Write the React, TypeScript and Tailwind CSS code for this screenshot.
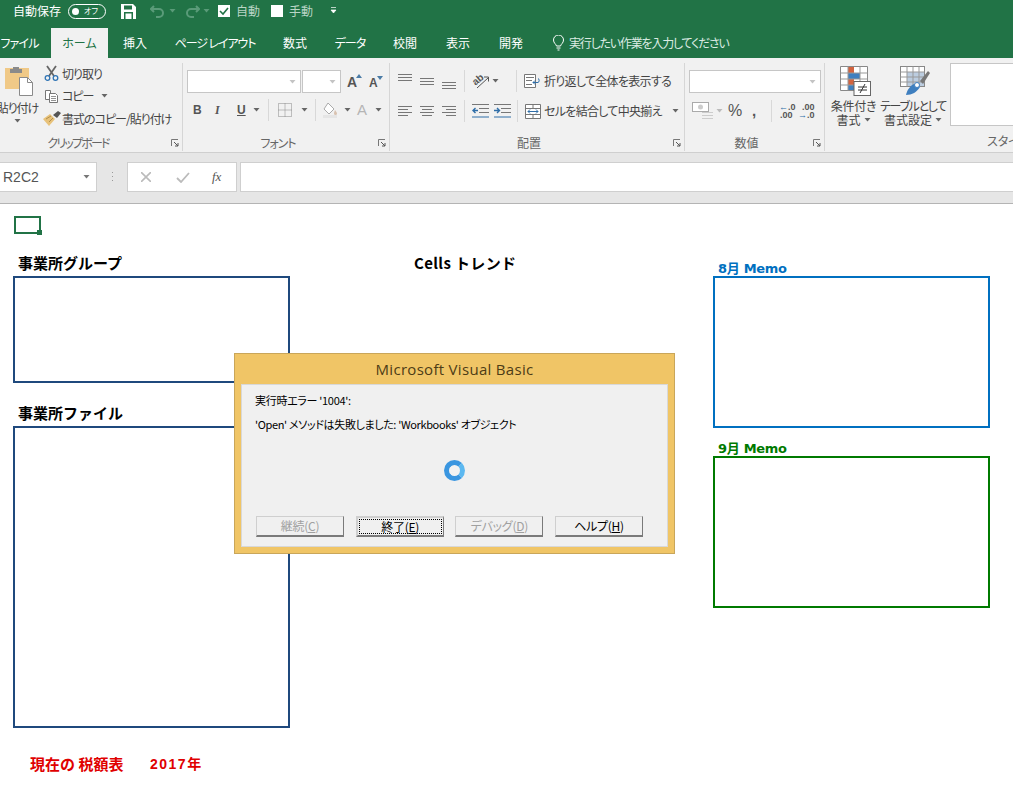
import React from "react";

const jp = "[font-family:'Noto_Sans_CJK_JP','Noto_Sans',sans-serif] [font-feature-settings:'palt']";

const Caret = ({ c = "#666" }: { c?: string }) => (
  <svg width="7" height="4" viewBox="0 0 7 4" className="shrink-0"><path d="M.5 0h6L3.500 3.500z" fill={c} /></svg>
);

const Sep = ({ h = "h-[22px]" }: { h?: string }) => <div className={`w-px ${h} bg-[#d8d8d8] shrink-0`} />;

const Launcher = () => (
  <svg width="8" height="8" viewBox="0 0 8 8" className="absolute right-[3px] bottom-[4px]">
    <path d="M0.5 7V0.5H7" fill="none" stroke="#777" />
    <path d="M3 3l4 4M7 4v3H4" fill="none" stroke="#555" />
  </svg>
);

const Group = ({ w, label, children, launcher = true, labelClass = "" }: { w: string; label: string; children: React.ReactNode; launcher?: boolean; labelClass?: string }) => (
  <div className={`relative ${w} h-[88px] shrink-0 flex flex-col border-r border-[#d6d6d6]`}>
    <div className="flex-1 min-h-0">{children}</div>
    <div className={`h-[17px] text-center text-[12px] leading-[17px] text-[#666] ${labelClass}`}>{label}</div>
    {launcher && <Launcher />}
  </div>
);

const HA = ({ kind }: { kind: "l" | "c" | "r" }) => {
  const short: Record<string, [number, number]> = { l: [1, 11], c: [3, 13], r: [5, 15] };
  const [a, b] = short[kind];
  return (
    <svg width="16" height="12" viewBox="0 0 16 12">
      <path d="M1 1.500h14" stroke="#777" />
      <path d={`M${a} 4.500H${b}`} stroke="#777" />
      <path d="M1 7.500h14" stroke="#777" />
      <path d={`M${a} 10.500H${b}`} stroke="#777" />
    </svg>
  );
};

const VA = ({ top }: { top: number }) => (
  <svg width="16" height="16" viewBox="0 0 16 16">
    <path d={`M1 ${top + 0.5}h14M1 ${top + 3.5}h14M1 ${top + 6.5}h14`} stroke="#777" />
  </svg>
);

const Input = ({ w }: { w: string }) => (
  <div className={`${w} h-[23px] bg-white border border-[#c6c6c6] flex items-center justify-end pr-[4px]`}>
    <Caret c="#c4c4c4" />
  </div>
);

const Paste = () => (
  <svg width="28" height="29" viewBox="0 0 28 29">
    <rect x="0" y="1" width="24" height="21" fill="#f0c987" />
    <rect x="8" y="0" width="6" height="3" fill="#8a8a8a" />
    <rect x="5" y="2" width="12" height="4" fill="#8a8a8a" />
    <path d="M14.500 10.500h8l5 5v13h-13z" fill="#fff" stroke="#8a8a8a" />
    <path d="M22.500 10.500v5h5" fill="none" stroke="#8a8a8a" />
  </svg>
);

const Scissors = () => (
  <svg width="15" height="16" viewBox="0 0 15 16">
    <path d="M3 1l7 10M12 1L5 11" stroke="#666" strokeWidth="1.800" fill="none" />
    <circle cx="3.500" cy="13" r="2.300" fill="none" stroke="#2f74b5" strokeWidth="1.300" />
    <circle cx="11.500" cy="13" r="2.300" fill="none" stroke="#2f74b5" strokeWidth="1.300" />
  </svg>
);

const Copy = () => (
  <svg width="15" height="14" viewBox="0 0 15 14">
    <path d="M1.500 1.500h5v9h-5z" fill="#fff" stroke="#777" />
    <path d="M5.500 4.500h6l2 2v7h-8z" fill="#fff" stroke="#777" />
    <path d="M7 7.500h5M7 9.500h5M7 11.500h5" stroke="#777" strokeWidth="0.800" />
  </svg>
);

const Brush = () => (
  <svg width="18" height="15" viewBox="0 0 18 15">
    <path d="M0 8l7-5 5 5-6 7z" fill="#e8c27a" />
    <path d="M10 4l5-4 3 2-4 5z" fill="#555" />
    <path d="M3 8l5-3M6 11l4-4" stroke="#b18f4f" />
  </svg>
);

const Borders = () => (
  <svg width="14" height="14" viewBox="0 0 14 14">
    <path d="M.5.500h13v13H.500zM7 .500v13M.5 7h13" fill="none" stroke="#888" strokeDasharray="1 1" />
  </svg>
);

const Fill = () => (
  <svg width="17" height="16" viewBox="0 0 17 16">
    <path d="M6 1l6 6-5 5-5-5z" fill="#fff" stroke="#aaa" />
    <path d="M13 8c1 1.500 2 2.500 2 3.500a1 1 0 01-3 0c0-1 .5-2 1-3.500z" fill="#d9c2b0" />
    <rect x="1" y="13" width="14" height="3" fill="#e5e5e5" />
  </svg>
);

const Orientation = () => (
  <svg width="18" height="16" viewBox="0 0 18 16">
    <text x="1" y="10" fontSize="10" fontWeight="bold" fill="#555" transform="rotate(-40 6 8)" fontFamily="Liberation Sans">ab</text>
    <path d="M5 15l11-10M12 4h4.500v4.500" fill="none" stroke="#555" />
  </svg>
);

const Indent = ({ dir }: { dir: "l" | "r" }) => (
  <svg width="17" height="14" viewBox="0 0 17 14">
    <path d="M0 .5h17M7 4.500h10M7 8.500h10" stroke="#777" />
    <path d="M0 13h17" stroke="#2f6ea8" />
    {dir === "l" ? <path d="M1 6.500h5M3.500 4L1 6.500 3.500 9" fill="none" stroke="#2f6ea8" strokeWidth="1.400" /> : <path d="M0 6.500h5M3 4l2.500 2.500L3 9" fill="none" stroke="#2f6ea8" strokeWidth="1.400" />}
  </svg>
);

const Wrap = () => (
  <svg width="16" height="14" viewBox="0 0 16 14">
    <path d="M.5.500h11v13H.500z" fill="#fff" stroke="#777" />
    <path d="M2 3.500h8M2 6.500h6M2 10.500h6" stroke="#777" />
    <path d="M9 8.500h5c1.500 0 1.500-4 0-4M9 8.500l2-2M9 8.500l2 2" fill="none" stroke="#2f6ea8" />
  </svg>
);

const Merge = () => (
  <svg width="16" height="15" viewBox="0 0 16 15">
    <path d="M.5.500h15v14H.500zM.5 4.500h15M.5 10.500h15M8 .500v4M8 10.500v4" fill="#fff" stroke="#777" />
    <path d="M3 7.500h10M3 7.500l2-2M3 7.500l2 2M13 7.500l-2-2M13 7.500l-2 2" fill="none" stroke="#2f6ea8" />
  </svg>
);

const Currency = () => (
  <svg width="22" height="18" viewBox="0 0 22 18">
    <rect x=".5" y=".5" width="16" height="9" fill="#fff" stroke="#aaa" />
    <circle cx="8.500" cy="5" r="2.500" fill="#ccc" />
    <path d="M10 10.500h11M10 13.500h11M10 16.500h11" stroke="#ccc" />
  </svg>
);

const CondFormat = () => (
  <svg width="31" height="30" viewBox="0 0 31 30">
    <path d="M.5.500h27v24H.500z" fill="#fff" stroke="#888" />
    <rect x="8" y="1" width="6" height="6" fill="#d2633f" />
    <rect x="8" y="7" width="12" height="6" fill="#3f7fbf" />
    <rect x="8" y="13" width="6" height="6" fill="#d2633f" />
    <rect x="8" y="19" width="6" height="5" fill="#3f7fbf" />
    <path d="M8 .5v24M20 .5v24M.5 7h27M.5 13h27M.5 19h27" stroke="#999" fill="none" />
    <rect x="14" y="15.500" width="16.500" height="14" fill="#fff" stroke="#666" />
    <path d="M18 21h9M18 24h9M25 18l-5 9" stroke="#333" fill="none" />
  </svg>
);

const TableFmt = () => (
  <svg width="30" height="30" viewBox="0 0 30 30">
    <rect x=".5" y=".5" width="24" height="20" fill="#fff" stroke="#888" />
    <rect x="7" y="6" width="17" height="14" fill="#bccde0" />
    <path d="M7 .5v20M13 .5v20M19 .5v20M.5 6h24M.5 11h24M.5 16h24" stroke="#999" fill="none" />
    <path d="M20 15L28 5l2 2-7 11z" fill="#777" />
    <path d="M6 29c1-5 4-9 8-11 3 0 5 1 6 3-3 5-8 8-14 8z" fill="#3f7fbf" />
    <circle cx="17" cy="19" r="2.500" fill="#fff" stroke="#3f7fbf" />
  </svg>
);

const Tab = ({ children, w, active }: { children: React.ReactNode; w: string; active?: boolean }) => (
  <div className={`${w} h-[30px] shrink-0 flex items-center justify-center text-[12px] whitespace-nowrap ${active ? "bg-[#f1f1f1] text-[#217346]" : "text-white"}`}>
    {children}
  </div>
);

const Shape = ({ cls }: { cls: string }) => <div className={`absolute bg-white border-2 ${cls}`} />;

const DlgBtn = ({ children, focus, disabled }: { children: React.ReactNode; focus?: boolean; disabled?: boolean }) => (
  <div
    className={`relative w-[88px] h-[21px] bg-[#f0f0f0] border border-[#cfcfcf] border-r-[#7a7a7a] border-b-2 border-b-[#7a7a7a] flex items-center justify-center text-[12px] leading-none tracking-[-0.3px] ${disabled ? "text-[#a0a0a0]" : "text-black"} ${focus ? "border-[#5a5a5a] border-t-2 border-l-2" : ""}`}
  >
    {focus && <div className="absolute inset-[1px] border border-dotted border-black" />}
    {children}
  </div>
);

const GrowA = ({ size, tri, dir }: { size: string; tri: string; dir: "u" | "d" }) => (
  <span className={`relative inline-block ${size} leading-none font-bold text-[#555] [font-family:'Liberation_Sans',sans-serif]`}>
    A
    <svg width="6" height="4" viewBox="0 0 6 4" className={`absolute -top-[1px] ${tri}`}>
      <path d={dir === "u" ? "M0 4h6L3 0z" : "M0 0h6L3 4z"} fill="#4a7ba6" />
    </svg>
  </span>
);

export default function App() {
  return (
    <div className={`relative w-[1013px] h-[792px] overflow-hidden bg-white ${jp}`}>
      {/* title bar */}
      <div className="h-[22px] bg-[#217346] flex items-center pl-[13px] text-white text-[12px]">
        <span className="w-[49px] whitespace-nowrap">自動保存</span>
        <div className="ml-[6px] w-[38px] h-[15px] rounded-full border border-white flex items-center pl-[3px] gap-[5px]">
          <div className="w-[7px] h-[7px] rounded-full bg-white" />
          <span className="text-[8px] leading-none">オフ</span>
        </div>
        <svg width="15" height="15" viewBox="0 0 15 15" className="ml-[15px]">
          <path d="M0 0h12l3 3v12H0z" fill="#fff" />
          <rect x="3" y="1.500" width="8" height="4" fill="#217346" />
          <rect x="3" y="8" width="9" height="7" fill="#217346" />
          <rect x="4.500" y="9.500" width="6" height="5.500" fill="#fff" />
        </svg>
        <svg width="16" height="13" viewBox="0 0 16 13" className="ml-[14px]">
          <path d="M4 1L1 4l3 3M1 4h8a4 4 0 010 8H6" fill="none" stroke="#5a9b79" strokeWidth="2" />
        </svg>
        <div className="ml-[3px]"><Caret c="#5a9b79" /></div>
        <svg width="16" height="13" viewBox="0 0 16 13" className="ml-[8px]">
          <path d="M12 1l3 3-3 3M15 4H7a4 4 0 000 8h3" fill="none" stroke="#5a9b79" strokeWidth="2" />
        </svg>
        <div className="ml-[3px]"><Caret c="#5a9b79" /></div>
        <div className="ml-[8px] w-[12px] h-[12px] bg-white flex items-center justify-center">
          <svg width="10" height="9" viewBox="0 0 10 9"><path d="M1 4l3 3 5-6" fill="none" stroke="#217346" strokeWidth="1.600" /></svg>
        </div>
        <span className="ml-[6px] w-[35px] text-[#b9d5c5]">自動</span>
        <div className="w-[12px] h-[12px] bg-white" />
        <span className="ml-[6px] w-[35px] text-[#b9d5c5]">手動</span>
        <svg width="7" height="8" viewBox="0 0 7 8" className="ml-[6px]"><path d="M1 .5h5M1 3h5L3.500 6z" stroke="#fff" fill="#fff" strokeWidth=".7" /></svg>
      </div>
      {/* tabs */}
      <div className="h-[36px] bg-[#217346] flex items-end">
        <Tab w="w-[51px]"><span className="-ml-[12px] tracking-[-0.8px]">ファイル</span></Tab>
        <Tab w="w-[57px]" active>ホーム</Tab>
        <Tab w="w-[54px]">挿入</Tab>
        <Tab w="w-[106px]"><span className="tracking-[-1.1px]">ページ レイアウト</span></Tab>
        <Tab w="w-[54px]">数式</Tab>
        <Tab w="w-[56px]"><span className="tracking-[-1px]">データ</span></Tab>
        <Tab w="w-[54px]">校閲</Tab>
        <Tab w="w-[52px]">表示</Tab>
        <Tab w="w-[54px]">開発</Tab>
        <div className="h-[30px] flex items-center ml-[14px] text-[12px] text-[#dcebe3] gap-[4px]">
          <svg width="13" height="16" viewBox="0 0 13 16"><path d="M4.500 11C4 9 1.500 8 1.500 5a5 5 0 0110 0c0 3-2.500 4-3 6zM4.500 13h4M5.500 15h2" fill="none" stroke="#fff" /></svg>
          <span className="tracking-[-1.2px] whitespace-nowrap">実行したい作業を入力してください</span>
        </div>
      </div>
      {/* ribbon */}
      <div className="h-[94px] bg-[#f1f1f1] flex pt-[5px] overflow-hidden text-[#444] text-[12px]">
        <Group w="w-[183px]" label="クリップボード" labelClass="pr-[26px] tracking-[-1.800px]">
          <div className="flex h-full">
            <div className="w-[40px] shrink-0 flex flex-col items-center pt-[4px] -ml-[1px]">
              <div className="self-start ml-[6px] h-[33px]"><Paste /></div>
              <span className="whitespace-nowrap -ml-[3px] leading-[16px] h-[14px] tracking-[-1px]">貼り付け</span>
              <div className="mt-[5px] -ml-[3px]"><Caret /></div>
            </div>
            <div className="flex flex-col pl-[5px] -mt-[1px] leading-[23px]">
              <div className="h-[22px] flex items-center gap-[3px] tracking-[-1px]"><Scissors /><span>切り取り</span></div>
              <div className="h-[23px] flex items-center gap-[3px] tracking-[-1px]"><Copy /><span className="w-[36px]">コピー</span><Caret /></div>
              <div className="h-[22px] flex items-center gap-[1px] -ml-[1px] whitespace-nowrap tracking-[-1px]"><Brush /><span>書式のコピー/貼り付け</span></div>
            </div>
          </div>
        </Group>
        <Group w="w-[207px]" label="フォント" labelClass="pr-[16px] tracking-[-1px]">
          <div className="flex flex-col pl-[4px] pt-[7px]">
            <div className="flex items-center h-[23px] gap-[1px]">
              <Input w="w-[114px]" />
              <Input w="w-[39px]" />
              <div className="ml-[5px] w-[14px]"><GrowA size="text-[14px]" tri="-right-[5px]" dir="u" /></div>
              <div className="ml-[7px] w-[12px]"><GrowA size="text-[12px]" tri="-right-[5px]" dir="d" /></div>
            </div>
            <div className="flex items-center h-[22px] mt-[6px] text-[#555] font-bold [font-family:'Liberation_Sans',sans-serif]">
              <span className="ml-[6px] w-[22px]">B</span>
              <span className="w-[22px] italic [font-family:'Liberation_Serif',serif]">I</span>
              <span className="w-[16px] underline">U</span>
              <Caret />
              <div className="ml-[8px]"><Sep /></div>
              <div className="ml-[9px]"><Borders /></div>
              <div className="ml-[9px]"><Caret /></div>
              <div className="ml-[7px]"><Sep /></div>
              <div className="ml-[6px]"><Fill /></div>
              <div className="ml-[5px]"><Caret /></div>
              <span className="ml-[6px] text-[15px] text-[#b5b5b5] font-normal">A</span>
              <div className="ml-[8px]"><Caret /></div>
            </div>
          </div>
        </Group>
        <Group w="w-[295px]" label="配置" labelClass="pr-[16px]">
          <div className="flex flex-col pl-[7px] pt-[6px]">
            <div className="flex items-center h-[24px]">
              <VA top={1} />
              <div className="ml-[6px]"><VA top={5} /></div>
              <div className="ml-[6px]"><VA top={9} /></div>
              <div className="ml-[7px]"><Sep /></div>
              <div className="ml-[7px]"><Orientation /></div>
              <div className="ml-[2px]"><Caret /></div>
              <div className="ml-[17px]"><Sep /></div>
              <div className="ml-[7px] flex items-center gap-[4px] whitespace-nowrap"><Wrap /><span className="tracking-[-0.7px]">折り返して全体を表示する</span></div>
            </div>
            <div className="flex items-center h-[24px] mt-[6px]">
              <HA kind="l" />
              <div className="ml-[6px]"><HA kind="c" /></div>
              <div className="ml-[6px]"><HA kind="r" /></div>
              <div className="ml-[7px]"><Sep /></div>
              <div className="ml-[7px]"><Indent dir="l" /></div>
              <div className="ml-[5px]"><Indent dir="r" /></div>
              <div className="ml-[6px]"><Sep /></div>
              <div className="ml-[7px] flex items-center gap-[3px] whitespace-nowrap"><Merge /><span className="tracking-[-0.7px]">セルを結合して中央揃え</span><div className="ml-[7px]"><Caret /></div></div>
            </div>
          </div>
        </Group>
        <Group w="w-[140px]" label="数値" labelClass="pr-[16px]">
          <div className="flex flex-col pl-[4px] pt-[7px]">
            <Input w="w-[132px]" />
            <div className="flex items-center h-[24px] mt-[6px]">
              <div className="ml-[3px]"><Currency /></div>
              <div className="ml-[2px]"><Caret c="#bbb" /></div>
              <span className="ml-[5px] w-[24px] text-[16px] text-[#555] [font-family:'Liberation_Sans',sans-serif]">%</span>
              <span className="w-[19px] text-[15px] font-bold text-[#555] [font-family:'Liberation_Sans',sans-serif]">,</span>
              <Sep />
              <div className="ml-[5px] w-[21px] flex flex-col text-[9px] leading-[8px] font-bold text-[#555] [font-family:'Liberation_Sans',sans-serif]">
                <span className="pl-[2px]"><span className="text-[#2f6ea8]">←</span>.0</span><span className="pl-[3px]">.00</span>
              </div>
              <div className="w-[20px] flex flex-col text-[9px] leading-[8px] font-bold text-[#555] [font-family:'Liberation_Sans',sans-serif]">
                <span className="pl-[4px]">.00</span><span className="pl-[0px]"><span className="text-[#2f6ea8]">→</span>.0</span>
              </div>
            </div>
          </div>
        </Group>
        <div className="relative flex-1 h-[88px] flex pl-[3px]">
          <div className="w-[51px] shrink-0 flex flex-col items-center pt-[3px]">
            <div className="h-[31px] ml-[4px]"><CondFormat /></div>
            <div className="mt-[2px] leading-[14px] text-center whitespace-nowrap tracking-[-0.3px]">条件付き</div>
            <div className="flex items-center justify-center gap-[3px] leading-[14px]">書式<Caret /></div>
          </div>
          <div className="w-[68px] shrink-0 flex flex-col items-center pt-[3px]">
            <div className="h-[31px] ml-[4px]"><TableFmt /></div>
            <div className="mt-[2px] leading-[14px] text-center whitespace-nowrap tracking-[-1.300px]">テーブルとして</div>
            <div className="flex items-center justify-center gap-[3px] leading-[14px]">書式設定<Caret /></div>
          </div>
          <div className="flex-1 flex flex-col ml-[3px]">
            <div className="h-[63px] bg-white border border-[#c6c6c6] border-r-0" />
            <div className="mt-[6px] pl-[37px] whitespace-nowrap text-[#666]">スタイル</div>
          </div>
        </div>
      </div>
      {/* spacer and formula bar */}
      <div className="h-[10px] bg-[#e6e6e6] border-t border-[#cfcfcf]" />
      <div className="h-[30px] bg-[#e6e6e6] flex">
        <div className="w-[97px] bg-white border border-[#cfcfcf] border-l-0 flex items-center justify-between pl-[3px] pr-[6px]">
          <span className="text-[14px] text-[#555] [font-family:'Liberation_Sans',sans-serif]">R2C2</span>
          <Caret c="#777" />
        </div>
        <div className="w-[30px] flex items-center justify-center">
          <svg width="3" height="12" viewBox="0 0 3 12"><path d="M1 1h1v1H1zM1 5h1v1H1zM1 9h1v1H1z" fill="#999" /></svg>
        </div>
        <div className="w-[110px] bg-white border border-[#cfcfcf] flex items-center">
          <svg width="10" height="10" viewBox="0 0 10 10" className="ml-[13px]"><path d="M0 0l10 10M10 0L0 10" stroke="#bbb" strokeWidth="1.600" /></svg>
          <svg width="14" height="11" viewBox="0 0 14 11" className="ml-[25px]"><path d="M1 6l4 4 8-9" fill="none" stroke="#bbb" strokeWidth="1.800" /></svg>
          <span className="ml-[22px] text-[13px] italic text-[#555] [font-family:'Liberation_Serif',serif]">fx</span>
        </div>
        <div className="ml-[3px] flex-1 bg-white border border-[#cfcfcf] border-r-0" />
      </div>
      <div className="h-[12px] bg-[#e6e6e6] border-b border-[#b4b4b4]" />

      {/* sheet: free canvas of shapes */}
      <div className="absolute left-[14px] top-[216px] w-[27px] h-[18px] border-2 border-[#217346]">
        <div className="absolute -right-[3px] -bottom-[3px] w-[5px] h-[5px] bg-[#217346]" />
      </div>
      <div className="absolute left-[18px] top-[252px] text-[15px] leading-[22px] font-bold text-black [font-feature-settings:normal]">事業所グループ</div>
      <Shape cls="left-[13px] top-[276px] w-[277px] h-[107px] border-[#1f497d]" />
      <div className="absolute left-[18px] top-[402px] text-[15px] leading-[22px] font-bold text-black [font-feature-settings:normal]">事業所ファイル</div>
      <Shape cls="left-[13px] top-[426px] w-[277px] h-[302px] border-[#1f497d]" />
      <div className="absolute left-[414px] top-[252px] text-[15px] leading-[22px] font-bold text-black [font-feature-settings:normal] tracking-[0.35px]">Cells トレンド</div>
      <div className="absolute left-[718px] top-[260px] text-[13px] leading-[18px] font-bold text-[#0070c0] [font-family:'DejaVu_Sans','Noto_Sans_CJK_JP',sans-serif] tracking-[-0.3px]">8月 Memo</div>
      <Shape cls="left-[713px] top-[276px] w-[277px] h-[152px] border-[#0070c0]" />
      <div className="absolute left-[718px] top-[440px] text-[13px] leading-[18px] font-bold text-[#007a00] [font-family:'DejaVu_Sans','Noto_Sans_CJK_JP',sans-serif] tracking-[-0.3px]">9月 Memo</div>
      <Shape cls="left-[713px] top-[456px] w-[277px] h-[152px] border-[#007a00]" />
      <div className="absolute left-[30px] top-[754px] text-[15px] leading-[20px] font-bold text-[#e00000] whitespace-pre [font-feature-settings:normal]">現在の 税額表</div>
      <div className="absolute left-[150px] top-[754px] text-[14px] leading-[20px] font-bold text-[#e00000] [font-family:'Liberation_Sans','Noto_Sans_CJK_JP',sans-serif] tracking-[1.500px]">2017年</div>

      {/* dialog */}
      <div className="absolute left-[234px] top-[353px] w-[441px] h-[201px] bg-[#f0c566] border border-[#c9a65a] flex flex-col px-[6px] pb-[6px]">
        <div className="h-[30px] flex items-center justify-center text-[15px] tracking-[0.3px] text-[#4d3c16] [font-family:'Open_Sans',sans-serif]">Microsoft Visual Basic</div>
        <div className="flex-1 bg-[#f0f0f0] border border-[#d8d8d8] flex flex-col pl-[13px] pr-[24px] text-[11px] text-black">
          <div className="mt-[8px] leading-[14px] tracking-[-0.3px]">実行時エラー '1004':</div>
          <div className="mt-[10px] leading-[14px] tracking-[-0.35px]">'Open' メソッドは失敗しました: 'Workbooks' オブジェクト</div>
          <div className="flex-1 flex items-center justify-center mb-[6px]">
            <div className="w-[21px] h-[21px] rounded-full border-[5px] border-[#3a96e0] border-r-[#5cb8f0] bg-[#f2f2f2] ml-[10px]" />
          </div>
          <div className="flex justify-between mb-[9px] pl-[1px]">
            <DlgBtn disabled>継続(<span className="underline">C</span>)</DlgBtn>
            <DlgBtn focus>終了(<span className="underline">E</span>)</DlgBtn>
            <DlgBtn disabled>デバッグ(<span className="underline">D</span>)</DlgBtn>
            <DlgBtn>ヘルプ(<span className="underline">H</span>)</DlgBtn>
          </div>
        </div>
      </div>
    </div>
  );
}
